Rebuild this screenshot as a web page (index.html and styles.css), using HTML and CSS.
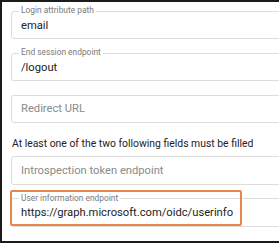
FILE: index.html
```html
<!DOCTYPE html>
<html lang="en">
<head>
<meta charset="utf-8">
<title>OIDC settings</title>
<link rel="stylesheet" href="styles.css">
</head>
<body>
<div class="frame">
  <div class="form">
    <div class="field">
      <span class="label">Login attribute path</span>
      <span class="value">email</span>
    </div>
    <div class="field">
      <span class="label">End session endpoint</span>
      <span class="value">/logout</span>
    </div>
    <div class="field">
      <span class="placeholder">Redirect URL</span>
    </div>
    <p class="hint">At least one of the two following fields must be filled</p>
    <div class="field">
      <span class="placeholder">Introspection token endpoint</span>
    </div>
    <div class="field">
      <span class="label">User information endpoint</span>
      <span class="value">https://graph.microsoft.com/oidc/userinfo</span>
      <span class="highlight"></span>
    </div>
  </div>
</div>
</body>
</html>
```

FILE: styles.css
```css
html, body {
  margin: 0;
  padding: 0;
  background: #1c1c1c;
  overflow: hidden;
}

.frame {
  width: 279px;
  height: 243px;
  box-sizing: border-box;
  border-top: 2px solid #1c1c1c;
  border-left: 2px solid #1c1c1c;
  border-bottom: 2px solid #1c1c1c;
  background: #ffffff;
  overflow: hidden;
  font-family: Roboto, "Liberation Sans", Arial, sans-serif;
}

.form {
  display: flex;
  flex-direction: column;
  align-items: flex-start;
  padding: 8.5px 0 0 8.5px;
}

.field {
  position: relative;
  box-sizing: border-box;
  width: 340px;
  flex-shrink: 0;
  height: 28.5px;
  margin-bottom: 13.5px;
  border: 1px solid #dcdcdc;
  border-radius: 3px;
  display: flex;
  align-items: center;
  padding: 0 9.5px;
}

.label {
  position: absolute;
  left: 7.5px;
  top: -6.5px;
  padding: 0 2px;
  background: #ffffff;
  font-size: 8.4px;
  line-height: 10px;
  color: #7a7a7a;
  white-space: nowrap;
}

.value {
  font-size: 11.2px;
  color: #222222;
  white-space: nowrap;
  padding-top: 1px;
}

.placeholder {
  font-size: 11.2px;
  color: #8a8a8a;
  white-space: nowrap;
}

.hint {
  margin: 0 0 5.5px 1.5px;
  font-size: 10.4px;
  line-height: 14px;
  color: #222222;
  white-space: nowrap;
}

.highlight {
  position: absolute;
  left: -1.5px;
  top: -8.8px;
  width: 232px;
  height: 36px;
  box-sizing: border-box;
  border: 2px solid #e8864f;
  border-radius: 2px;
  pointer-events: none;
}
```
